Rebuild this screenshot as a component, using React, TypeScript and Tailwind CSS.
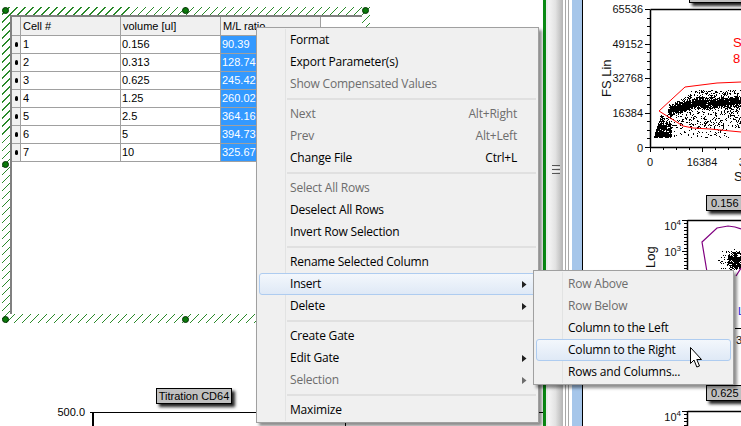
import React from "react";

function rng(seed: number) {
  let s = seed;
  return () => {
    s = (s * 16807) % 2147483647;
    return s / 2147483647;
  };
}

function dots(list: [number, number][]) {
  return list.map(([x, y]) => `M${Math.round(x)} ${Math.round(y)}h1v1h-1z`).join("");
}

function scatterOne() {
  const r = rng(4711);
  const pts: [number, number][] = [];
  // lower-left wedge
  for (let i = 0; i < 620; i++) {
    const y = 113 + Math.pow(r(), 0.5) * 24;
    const t = (y - 113) / 24;
    const left = 661 - t * 7;
    const x = left + Math.pow(r(), 1.35) * (671 - left);
    pts.push([x, y]);
  }
  // dense curved band
  for (let i = 0; i < 1800; i++) {
    const x = 668 + r() * 75;
    const c = x < 695 ? 110 - ((x - 668) / 27) * 7 : 103 - ((x - 695) / 46) * 1;
    const y = c + (r() + r() - 1) * 6.5;
    pts.push([x, y]);
  }
  // sparse above
  for (let i = 0; i < 300; i++) {
    const x = 672 + r() * 70;
    const top = x < 690 ? 104 - (x - 672) * 0.6 : 90;
    pts.push([x, top + r() * 12]);
  }
  // sparse below
  for (let i = 0; i < 340; i++) {
    const x = 672 + r() * 70;
    pts.push([x, 108 + r() * 20]);
  }
  // bottom line sparse
  for (let i = 0; i < 70; i++) {
    pts.push([668 + r() * 60, 128 + r() * 9]);
  }
  return dots(pts);
}

function scatterTwo() {
  const r = rng(977);
  const pts: [number, number][] = [];
  for (let i = 0; i < 420; i++) {
    const a = r() * 6.283;
    const d = Math.pow(r(), 0.7) * 9;
    pts.push([736 + Math.cos(a) * d, 260 + Math.sin(a) * d]);
  }
  for (let i = 0; i < 80; i++) {
    const a = r() * 6.283;
    const d = 6 + r() * 12;
    pts.push([734 + Math.cos(a) * d, 260 + Math.sin(a) * d * 0.8]);
  }
  return dots(pts);
}

const d1 = scatterOne();
const d2 = scatterTwo();

function yTicks(x: number, top: number, bottom: number, majorEvery: number, count: number) {
  const out: React.ReactNode[] = [];
  for (let i = 0; i <= count; i++) {
    const y = Math.round(top + ((bottom - top) * i) / count);
    const major = i % majorEvery === 0;
    out.push(<line key={i} x1={x - (major ? 5 : 3)} x2={x} y1={y + 0.5} y2={y + 0.5} stroke="#000" />);
  }
  return out;
}

type Item = {
  label?: string;
  disabled?: boolean;
  shortcut?: string;
  arrow?: boolean;
  active?: boolean;
  sep?: boolean;
};

const mainMenu: Item[] = [
  { label: "Format" },
  { label: "Export Parameter(s)" },
  { label: "Show Compensated Values", disabled: true },
  { sep: true },
  { label: "Next", disabled: true, shortcut: "Alt+Right" },
  { label: "Prev", disabled: true, shortcut: "Alt+Left" },
  { label: "Change File", shortcut: "Ctrl+L" },
  { sep: true },
  { label: "Select All Rows", disabled: true },
  { label: "Deselect All Rows" },
  { label: "Invert Row Selection" },
  { sep: true },
  { label: "Rename Selected Column" },
  { label: "Insert", arrow: true, active: true },
  { label: "Delete", arrow: true },
  { sep: true },
  { label: "Create Gate" },
  { label: "Edit Gate", arrow: true },
  { label: "Selection", arrow: true, disabled: true },
  { sep: true },
  { label: "Maximize" },
];

const subMenu: Item[] = [
  { label: "Row Above", disabled: true },
  { label: "Row Below", disabled: true },
  { label: "Column to the Left" },
  { label: "Column to the Right", active: true },
  { label: "Rows and Columns..." },
];

function MenuRows({ items, sub }: { items: Item[]; sub?: boolean }) {
  return (
    <>
      {items.map((it, i) =>
        it.sep ? (
          <div key={i} className="h-[8px] ml-[30px] mr-[2px] flex items-center">
            <div className="h-[2px] w-full bg-[#e0e0e0]" />
          </div>
        ) : (
          <div
            key={i}
            className={
              "h-[22px] mx-[2px] flex items-center justify-between pr-[8px] rounded-[3px] border " +
              (sub ? "pl-[31px] " : "pl-[30px] ") +
              (it.active
                ? "border-[#aeccf0] bg-gradient-to-b from-[#f3f7fc] to-[#dfe9f6] "
                : "border-transparent ") +
              (it.disabled ? "text-[#6d6d6d]" : "text-black")
            }
          >
            <span>{it.label}</span>
            {it.shortcut && <span className="mr-[10px]">{it.shortcut}</span>}
            {it.arrow && (
              <svg width="5" height="7" viewBox="0 0 5 7">
                <path d="M0 0L4.5 3.5L0 7z" fill={it.disabled ? "#6d6d6d" : "#202020"} />
              </svg>
            )}
          </div>
        )
      )}
    </>
  );
}

function Handle({ className }: { className: string }) {
  return (
    <div
      className={
        "absolute w-[7px] h-[7px] rounded-full bg-[#0a7a0a] border border-[#063006] " + className
      }
    />
  );
}

function Tag({ children, className }: { children: React.ReactNode; className: string }) {
  return (
    <div
      className={
        "h-[16px] flex items-center px-[4px] whitespace-nowrap bg-[#c0c0c0] border border-black text-[11px] text-black shadow-[3px_3px_3px_#222] font-['Liberation_Sans',sans-serif] " +
        className
      }
    >
      {children}
    </div>
  );
}

const rows = [
  ["1", "0.156", "90.39"],
  ["2", "0.313", "128.74"],
  ["3", "0.625", "245.42"],
  ["4", "1.25", "260.02"],
  ["5", "2.5", "364.16"],
  ["6", "5", "394.73"],
  ["7", "10", "325.67"],
];

const chartFont = { fontFamily: "'Liberation Sans', sans-serif" };

export default function App() {
  return (
    <div className="relative w-[741px] h-[426px] overflow-hidden bg-white flex font-['Liberation_Sans',sans-serif]">
      {/* left canvas */}
      <div className="w-[543px] h-full shrink-0 flex flex-col bg-white">
        <div className="relative mt-[7px] ml-[2px] w-[368px] h-[316px] p-[8px] pb-[9px] bg-[repeating-linear-gradient(135deg,#ffffff_0px,#ffffff_4.9px,#2a8a2a_4.9px,#2a8a2a_5.66px)]">
          <div className="w-full h-full bg-white border-l-2 border-t-2 border-[#808080] text-[11px] text-black">
            <div className="grid grid-cols-[9px_100px_100px_100px] grid-rows-[19px] auto-rows-[18px] w-[309px]">
              <div className="bg-[#f0f0f0] border-b border-r border-[#a0a0a0]" />
              {["Cell #", "volume [ul]", "M/L ratio"].map((h) => (
                <div
                  key={h}
                  className="bg-[#f0f0f0] border-b border-r border-[#a0a0a0] pl-[2px] flex items-center"
                >
                  {h}
                </div>
              ))}
              {rows.map((r) => (
                <React.Fragment key={r[0]}>
                  <div className="bg-[#f0f0f0] border-b border-r border-[#a0a0a0] flex items-center justify-center">
                    <div className="w-[3px] h-[5px] rounded-full bg-black" />
                  </div>
                  <div className="border-b border-r border-[#a0a0a0] pl-[2px] flex items-center">{r[0]}</div>
                  <div className="border-b border-r border-[#a0a0a0] pl-[1px] flex items-center">{r[1]}</div>
                  <div className="bg-[#3399ff] text-white border-b border-r border-[#a0a0a0] pl-[1px] flex items-center">
                    {r[2]}
                  </div>
                </React.Fragment>
              ))}
            </div>
          </div>
          <Handle className="left-[0px] top-[0px]" />
          <Handle className="left-[180px] top-[0px]" />
          <Handle className="left-[360px] top-[0px]" />
          <Handle className="left-[0px] top-[154px]" />
          <Handle className="left-[0px] bottom-[0px]" />
          <Handle className="left-[180px] bottom-[0px]" />
        </div>
        <Tag className="ml-[156px] mt-[65px] w-[76px] justify-center">Titration CD64</Tag>
        <svg width="543" height="22" viewBox="0 404 543 22" style={chartFont} className="block">
          <text x="85" y="416" textAnchor="end" fontSize="11" fill="#000">
            500.0
          </text>
          <line x1="90" x2="543" y1="412.5" y2="412.5" stroke="#000" />
          <rect x="92" y="412" width="2" height="14" fill="#000" />
          <rect x="345" y="423" width="1" height="3" fill="#000" />
        </svg>
      </div>

      {/* splitter */}
      <div className="w-[3px] h-full bg-[#0a8a14]" />
      <div className="w-[2px] h-full bg-[#ececec]" />
      <div className="w-[15px] h-full bg-gradient-to-r from-[#f6f6f6] via-[#e2e2e2] to-[#b4b4b4] flex flex-col items-center gap-[1px] pt-[165px]">
        <div className="w-[8px] h-[1px] bg-[#555]" />
        <div className="w-[8px] h-[1px] bg-[#eee]" />
        <div className="w-[8px] h-[1px] bg-[#555]" />
        <div className="w-[8px] h-[1px] bg-[#eee]" />
        <div className="w-[8px] h-[1px] bg-[#555]" />
      </div>
      <div className="w-[2px] h-full bg-white" />
      <div className="w-[1px] h-full bg-[#a8a8a8]" />
      <div className="w-[2px] h-full bg-white" />
      <div className="w-[1px] h-full bg-[#a8a8a8]" />
      <div className="w-[3px] h-full bg-white" />
      <div className="w-[10px] h-full bg-[#a6c6ea]" />
      <div className="w-[1px] h-full bg-black" />

      {/* right pane */}
      <div className="w-[158px] h-full flex flex-col overflow-hidden bg-white">
        <div className="h-0">
          <Tag className="ml-[106px] w-[60px] -mt-[13px]">&nbsp;</Tag>
        </div>
        <svg width="158" height="195" viewBox="583 0 158 195" style={chartFont} className="block shrink-0">
          <path d="M650.5 9.5H741M650.5 9.5V147M650 147.5H741" stroke="#000" strokeWidth="1.5" fill="none" />
          {yTicks(650, 9, 147, 4, 16)}
          {Array.from({ length: 8 }, (_, i) => (
            <line
              key={i}
              x1={650.5 + i * 13}
              x2={650.5 + i * 13}
              y1={147}
              y2={i % 4 === 0 ? 152 : 150}
              stroke="#000"
            />
          ))}
          {[
            ["65536", 13],
            ["49152", 48],
            ["32768", 82],
            ["16384", 117],
            ["0", 152],
          ].map(([t, y]) => (
            <text key={t} x="643" y={y} textAnchor="end" fontSize="11" fill="#111">
              {t}
            </text>
          ))}
          <text x="650" y="166" textAnchor="middle" fontSize="11" fill="#111">
            0
          </text>
          <text x="702" y="166" textAnchor="middle" fontSize="11" fill="#111">
            16384
          </text>
          <text x="754" y="166" fontSize="11" fill="#111" textAnchor="middle">
            32768
          </text>
          <text x="734" y="181" fontSize="13" fill="#111">
            S
          </text>
          <text transform="translate(611 97) rotate(-90)" fontSize="13" fill="#111">
            FS Lin
          </text>
          <path d={d1} fill="#000" />
          <path
            d="M659 111L685 87L717 83L741 82M659 111L683 126L693 128L710 129L741 132"
            stroke="#ff0000"
            fill="none"
          />
          <text x="733" y="47" fontSize="13" fill="#ff0000">
            S
          </text>
          <text x="733" y="63" fontSize="13" fill="#ff0000">
            8
          </text>
        </svg>
        <Tag className="ml-[123px] w-[50px] shrink-0">0.156</Tag>
        <svg width="158" height="158" viewBox="583 211 158 158" style={chartFont} className="block shrink-0">
          <path d="M687.5 220.5H741M687.5 220V330" stroke="#000" strokeWidth="1.5" fill="none" />
          {yTicks(687, 220, 251, 9, 9)}
          {yTicks(687, 251, 282, 9, 9)}
          <text x="681" y="230" textAnchor="end" fontSize="11" fill="#111">
            10<tspan dy="-5" fontSize="8">4</tspan>
          </text>
          <text x="681" y="256" textAnchor="end" fontSize="11" fill="#111">
            10<tspan dy="-5" fontSize="8">3</tspan>
          </text>
          <text transform="translate(655 268) rotate(-90)" fontSize="13" fill="#111">
            Log
          </text>
          <path d={d2} fill="#000" />
          <path
            d="M741 229L735 227L728 226L717 228L702 242L707 272M741 268L736 276"
            stroke="#800080"
            strokeWidth="1.2"
            fill="none"
          />
          <text x="738" y="315" fontSize="11" fill="#2020e0">
            L
          </text>
          <path d="M735 328.5H741" stroke="#000" />
          <text x="736" y="344" fontSize="11" fill="#111">
            34
          </text>
        </svg>
        <div className="h-[16px] shrink-0" />
        <Tag className="ml-[123px] w-[50px] shrink-0">0.625</Tag>
        <svg width="158" height="27" viewBox="583 399 158 27" style={chartFont} className="block shrink-0">
          <path d="M687.5 409.5H741M687.5 409V426" stroke="#000" strokeWidth="1.5" fill="none" />
          {yTicks(687, 409, 440, 9, 9)}
          <text x="681" y="419" textAnchor="end" fontSize="11" fill="#111">
            10<tspan dy="-5" fontSize="8">4</tspan>
          </text>
        </svg>
      </div>

      {/* context menu */}
      <div className="absolute left-[256px] top-[27px] w-[283px] py-[1px] border border-[#a0a0a0] bg-[#f0f0f0] shadow-[3px_3px_3px_rgba(0,0,0,0.45)] text-[12px] font-['Open_Sans',sans-serif] tracking-[-0.2px]">
        <div className="absolute left-[28px] top-[1px] bottom-[1px] w-[1px] bg-[#e2e3e3]" />
        <div className="relative">
          <MenuRows items={mainMenu} />
        </div>
      </div>

      {/* submenu */}
      <div className="absolute left-[533px] top-[270px] w-[201px] pt-[2px] pb-[1px] border border-[#a0a0a0] bg-[#f0f0f0] shadow-[3px_3px_3px_rgba(0,0,0,0.45)] text-[12px] font-['Open_Sans',sans-serif] tracking-[-0.2px]">
        <div className="absolute left-[28px] top-[1px] bottom-[1px] w-[1px] bg-[#e2e3e3]" />
        <div className="relative">
          <MenuRows items={subMenu} sub />
        </div>
      </div>

      {/* mouse pointer */}
      <svg width="14" height="23" viewBox="0 0 14 23" className="absolute left-[690px] top-[347px]">
        <path
          d="M0.5 0.5V16.5L4 13L6.8 20L9.5 19L6.8 12.5H11.5z"
          fill="#fff"
          stroke="#000"
          strokeWidth="1"
          strokeLinejoin="round"
        />
      </svg>
    </div>
  );
}
